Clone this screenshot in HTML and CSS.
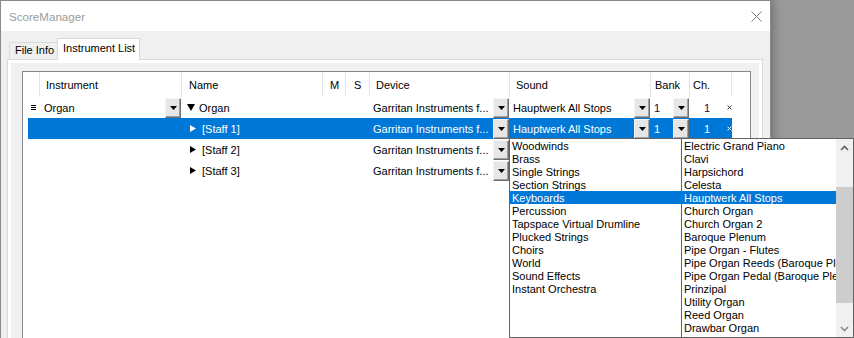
FILE: index.html
```html
<!DOCTYPE html>
<html>
<head>
<meta charset="utf-8">
<title>ScoreManager</title>
<link rel="stylesheet" href="styles.css">
</head>
<body>
<div class="window">
  <div class="titlebar">
    <span class="title">ScoreManager</span>
    <svg class="close" width="11" height="11" viewBox="0 0 11 11"><path d="M0.5 0.5L10.5 10.5M10.5 0.5L0.5 10.5" stroke="#7a7a7a" stroke-width="1" fill="none"/></svg>
  </div>
  <div class="client">
    <div class="tabs">
      <div class="tab">File Info</div>
      <div class="tab active">Instrument List</div>
    </div>
    <div class="tabpanel">
      <div class="panel-inner">
        <div class="grid">
          <div class="row header">
            <div class="c c0"></div>
            <div class="c c1">Instrument</div>
            <div class="c c2">Name</div>
            <div class="c c3">M</div>
            <div class="c c4">S</div>
            <div class="c c5">Device</div>
            <div class="c c6">Sound</div>
            <div class="c c7">Bank</div>
            <div class="c c8">Ch.</div>
            <div class="c c9"></div>
          </div>
          <div class="row">
            <div class="c c0"><svg class="handle" width="5" height="5" viewBox="0 0 5 5"><path d="M0 0.5H5M0 2.5H5M0 4.5H5" stroke="currentColor" stroke-width="1"/></svg></div>
            <div class="c c1"><span class="txt">Organ</span><span class="dd"><svg width="7" height="4" viewBox="0 0 7 4"><path d="M0 0H7L3.5 4Z"/></svg></span></div>
            <div class="c c2"><svg class="tri-down" width="8" height="7" viewBox="0 0 8 7"><path d="M0 0H8L4 7Z" fill="currentColor"/></svg><span class="name-parent">Organ</span></div>
            <div class="c c3"></div>
            <div class="c c4"></div>
            <div class="c c5"><span class="txt">Garritan Instruments f...</span><span class="dd"><svg width="7" height="4" viewBox="0 0 7 4"><path d="M0 0H7L3.5 4Z"/></svg></span></div>
            <div class="c c6"><span class="txt">Hauptwerk All Stops</span><span class="dd"><svg width="7" height="4" viewBox="0 0 7 4"><path d="M0 0H7L3.5 4Z"/></svg></span></div>
            <div class="c c7"><span class="num">1</span><span class="dd"><svg width="7" height="4" viewBox="0 0 7 4"><path d="M0 0H7L3.5 4Z"/></svg></span></div>
            <div class="c c8"><span class="num ch">1</span><svg class="x" width="5" height="5" viewBox="0 0 5 5"><path d="M0.5 0.5L4.5 4.5M4.5 0.5L0.5 4.5" stroke="currentColor" stroke-width="1"/></svg></div>
            <div class="c c9"></div>
          </div>
          <div class="row sel">
            <div class="c c0"></div>
            <div class="c c1"></div>
            <div class="c c2"><svg class="tri-right" width="6" height="7" viewBox="0 0 6 7"><path d="M0 0L6 3.5L0 7Z" fill="currentColor"/></svg><span class="name-child">[Staff 1]</span></div>
            <div class="c c3"></div>
            <div class="c c4"></div>
            <div class="c c5"><span class="txt">Garritan Instruments f...</span><span class="dd"><svg width="7" height="4" viewBox="0 0 7 4"><path d="M0 0H7L3.5 4Z"/></svg></span></div>
            <div class="c c6"><span class="txt">Hauptwerk All Stops</span><span class="dd"><svg width="7" height="4" viewBox="0 0 7 4"><path d="M0 0H7L3.5 4Z"/></svg></span></div>
            <div class="c c7"><span class="num">1</span><span class="dd"><svg width="7" height="4" viewBox="0 0 7 4"><path d="M0 0H7L3.5 4Z"/></svg></span></div>
            <div class="c c8"><span class="num ch">1</span><svg class="x" width="5" height="5" viewBox="0 0 5 5"><path d="M0.5 0.5L4.5 4.5M4.5 0.5L0.5 4.5" stroke="currentColor" stroke-width="1"/></svg></div>
            <div class="c c9"></div>
          </div>
          <div class="row">
            <div class="c c0"></div>
            <div class="c c1"></div>
            <div class="c c2"><svg class="tri-right" width="6" height="7" viewBox="0 0 6 7"><path d="M0 0L6 3.5L0 7Z" fill="currentColor"/></svg><span class="name-child">[Staff 2]</span></div>
            <div class="c c3"></div>
            <div class="c c4"></div>
            <div class="c c5"><span class="txt">Garritan Instruments f...</span><span class="dd"><svg width="7" height="4" viewBox="0 0 7 4"><path d="M0 0H7L3.5 4Z"/></svg></span></div>
            <div class="c c6"></div>
            <div class="c c7"></div>
            <div class="c c8"></div>
            <div class="c c9"></div>
          </div>
          <div class="row">
            <div class="c c0"></div>
            <div class="c c1"></div>
            <div class="c c2"><svg class="tri-right" width="6" height="7" viewBox="0 0 6 7"><path d="M0 0L6 3.5L0 7Z" fill="currentColor"/></svg><span class="name-child">[Staff 3]</span></div>
            <div class="c c3"></div>
            <div class="c c4"></div>
            <div class="c c5"><span class="txt">Garritan Instruments f...</span><span class="dd"><svg width="7" height="4" viewBox="0 0 7 4"><path d="M0 0H7L3.5 4Z"/></svg></span></div>
            <div class="c c6"></div>
            <div class="c c7"></div>
            <div class="c c8"></div>
            <div class="c c9"></div>
          </div>
        </div>
      </div>
    </div>
  </div>
</div>

<div class="popup">
  <div class="list left">
    <div class="item">Woodwinds</div>
    <div class="item">Brass</div>
    <div class="item">Single Strings</div>
    <div class="item">Section Strings</div>
    <div class="item sel">Keyboards</div>
    <div class="item">Percussion</div>
    <div class="item">Tapspace Virtual Drumline</div>
    <div class="item">Plucked Strings</div>
    <div class="item">Choirs</div>
    <div class="item">World</div>
    <div class="item">Sound Effects</div>
    <div class="item">Instant Orchestra</div>
  </div>
  <div class="list right">
    <div class="items">
      <div class="item">Electric Grand Piano</div>
      <div class="item">Clavi</div>
      <div class="item">Harpsichord</div>
      <div class="item">Celesta</div>
      <div class="item sel">Hauptwerk All Stops</div>
      <div class="item">Church Organ</div>
      <div class="item">Church Organ 2</div>
      <div class="item">Baroque Plenum</div>
      <div class="item">Pipe Organ - Flutes</div>
      <div class="item">Pipe Organ Reeds (Baroque Plenum)</div>
      <div class="item">Pipe Organ Pedal (Baroque Plenum)</div>
      <div class="item">Prinzipal</div>
      <div class="item">Utility Organ</div>
      <div class="item">Reed Organ</div>
      <div class="item">Drawbar Organ</div>
    </div>
    <div class="sb">
      <div class="sb-btn"><svg width="9" height="6" viewBox="0 0 9 6"><path d="M1 5L4.5 1.5L8 5" fill="none" stroke="#606060" stroke-width="1.6"/></svg></div>
      <div class="sb-track"><div class="sb-thumb"></div></div>
      <div class="sb-btn"><svg width="9" height="6" viewBox="0 0 9 6"><path d="M1 1L4.5 4.5L8 1" fill="none" stroke="#8a8a8a" stroke-width="1.6"/></svg></div>
    </div>
  </div>
</div>
</body>
</html>
```

FILE: styles.css
```css
* { box-sizing: border-box; }

html, body {
  margin: 0;
  padding: 0;
  width: 854px;
  height: 338px;
  overflow: hidden;
}

body {
  background: #9a9a9a;
  font-family: "Liberation Sans", Arial, sans-serif;
  font-size: 11px;
  color: #000;
  position: relative;
}

.window {
  width: 771px;
  height: 420px;
  background: #f0f0f0;
  border: 1px solid #8a8a8a;
  border-bottom: 0;
  box-shadow: 0 0 10px 1px rgba(0, 0, 0, 0.35);
  display: flex;
  flex-direction: column;
}

.titlebar {
  height: 30px;
  flex: none;
  background: #fff;
  display: flex;
  align-items: center;
  padding-left: 8px;
}

.title {
  font-size: 11.6px;
  color: #9b9b9b;
}

.close {
  margin-left: auto;
  margin-right: 8px;
  display: block;
}

.client {
  flex: 1;
  display: flex;
  flex-direction: column;
}

.tabs {
  height: 28px;
  flex: none;
  display: flex;
  align-items: flex-end;
  padding-left: 8px;
}

.tab {
  height: 17px;
  width: 48px;
  border: 1px solid #d9d9d9;
  border-right: 0;
  border-bottom: 0;
  background: #f0f0f0;
  padding-left: 5px;
  line-height: 15px;
  white-space: nowrap;
}

.tab.active {
  height: 22px;
  width: 83px;
  margin-bottom: -1px;
  border-right: 1px solid #d9d9d9;
  background: #fff;
  position: relative;
  z-index: 1;
  line-height: 18px;
}

.tabpanel {
  margin-left: 6px;
  width: 756px;
  flex: 1;
  border: 1px solid #d9d9d9;
  background: #fff;
  padding: 3px;
}

.panel-inner {
  height: 100%;
  background: #f0f0f0;
  padding: 8px 8px 0 11px;
}

.grid {
  height: 320px;
  border: 1px solid #828790;
  background: #fff;
}

.row {
  display: grid;
  grid-template-columns: 17px 142px 141px 23px 24px 140px 141px 39px 42px 18px;
  height: 21px;
}

.row.header {
  height: 25px;
}

.c {
  display: flex;
  align-items: center;
  white-space: nowrap;
  overflow: hidden;
  min-width: 0;
}

.header .c {
  border-right: 1px solid #e5e5e5;
}

.header .c9 { border-right: 0; }
.header .c1 { padding-left: 6px; }
.header .c2 { padding-left: 7px; }
.header .c3 { padding-left: 7px; }
.header .c4 { padding-left: 8px; }
.header .c5 { padding-left: 6px; }
.header .c6 { padding-left: 6px; }
.header .c7 { padding-left: 4px; }
.header .c8 { padding-left: 3px; }

.row.sel {
  background: linear-gradient(to right, #fff 5px, #0078d7 5px, #0078d7 709px, #fff 709px);
  color: #fff;
}

.handle { margin-left: 8px; display: block; }

.c1 .txt { margin-left: 4px; }
.c5 .txt { margin-left: 3px; }
.c6 .txt { margin-left: 3px; }

.dd {
  margin-left: auto;
  margin-right: 1px;
  align-self: flex-start;
  margin-top: 1px;
  width: 16px;
  height: 20px;
  flex: none;
  background: #e6e6e6;
  border: 1px solid;
  border-color: #f4f4f4 #6d6d6d #6d6d6d #f4f4f4;
  box-shadow: inset -1px -1px 0 #a0a0a0;
  display: flex;
  align-items: center;
  justify-content: center;
  padding-bottom: 1px;
}

.dd svg { display: block; fill: #000; }

.tri-down { margin-left: 5px; display: block; }
.name-parent { margin-left: 4px; }
.tri-right { margin-left: 8px; display: block; }
.name-child { margin-left: 6px; }

.num { color: #2e0046; }
.sel .num { color: #fff; }
.c7 .num { margin-left: 3px; }
.ch { margin-left: 14px; }

.x {
  display: block;
  margin-left: 17px;
  color: #333;
}
.sel .x { color: #fff; }

/* dropdown popup lists */
.popup {
  position: absolute;
  left: 509px;
  top: 138px;
  display: flex;
  z-index: 5;
}

.list {
  width: 173px;
  height: 200px;
  border: 1px solid #646464;
  background: #fff;
  overflow: hidden;
}

.list.right {
  margin-left: -1px;
  display: flex;
}

.items {
  width: 154px;
  flex: none;
  overflow: hidden;
}

.item {
  height: 13px;
  line-height: 12px;
  padding-top: 1px;
  padding-left: 2px;
  white-space: nowrap;
  overflow: hidden;
}

.item.sel {
  background: #0078d7;
  color: #fff;
}

.sb {
  width: 17px;
  flex: none;
  background: #f0f0f0;
  display: flex;
  flex-direction: column;
}

.sb-btn {
  height: 17px;
  flex: none;
  display: flex;
  align-items: center;
  justify-content: center;
}

.sb-btn svg { display: block; }

.sb-track { flex: 1; }

.sb-thumb {
  margin-top: 31px;
  height: 116px;
  background: #cdcdcd;
}
```
